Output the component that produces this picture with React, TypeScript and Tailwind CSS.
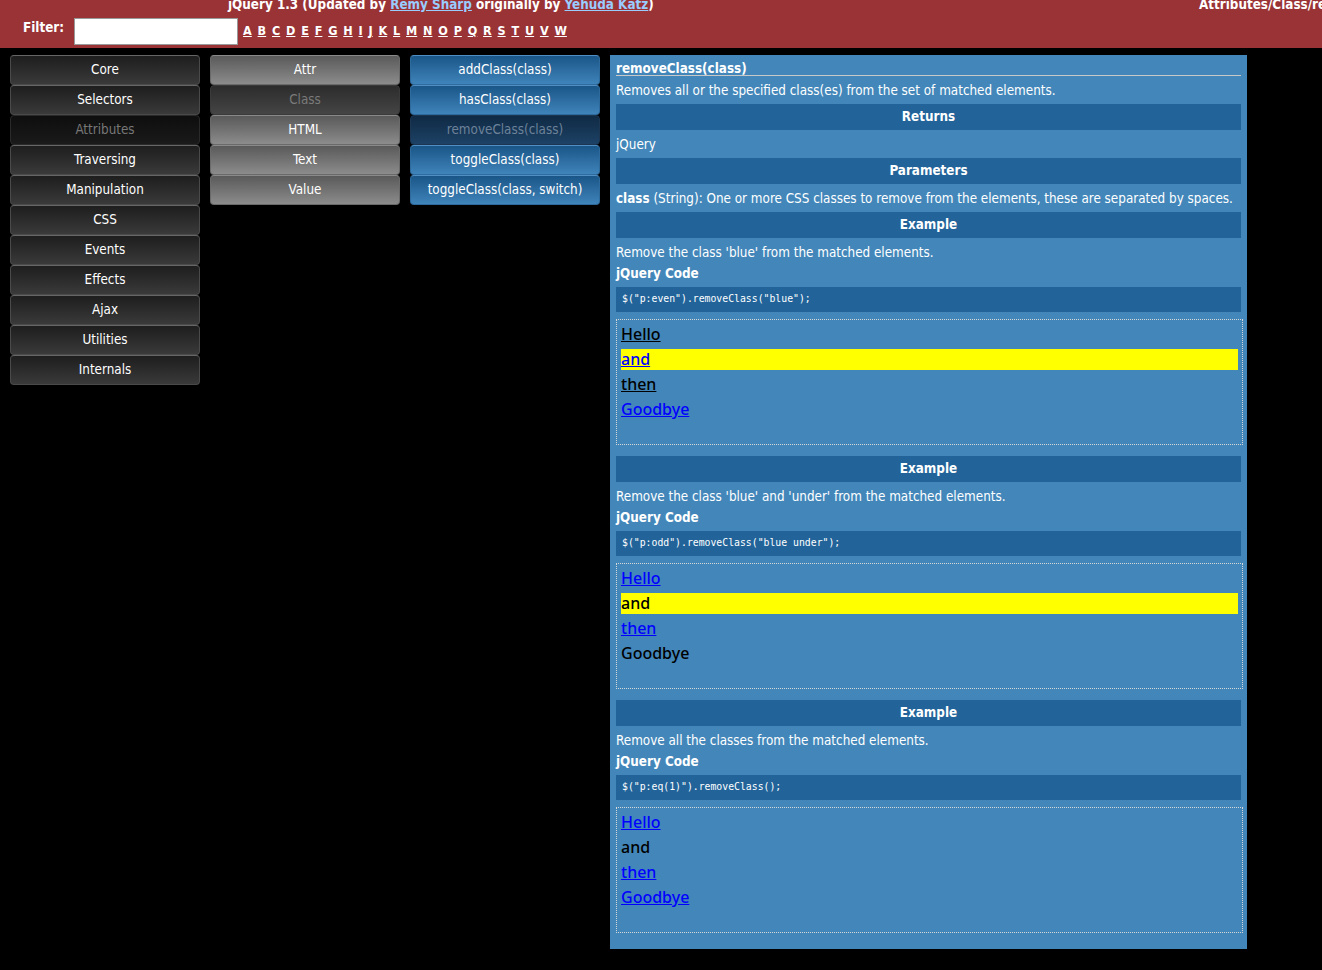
const letters = "ABCDEFGHIJKLMNOPQRSTUVW".split("");

const sections = ["Core", "Selectors", "Attributes", "Traversing", "Manipulation", "CSS", "Events", "Effects", "Ajax", "Utilities", "Internals"];
const groups = ["Attr", "Class", "HTML", "Text", "Value"];
const methods = ["addClass(class)", "hasClass(class)", "removeClass(class)", "toggleClass(class)", "toggleClass(class, switch)"];

type DemoLine = { text: string; blue?: boolean; under?: boolean; hilite?: boolean };

const examples: { desc: string; code: string; lines: DemoLine[] }[] = [
  {
    desc: "Remove the class 'blue' from the matched elements.",
    code: '$("p:even").removeClass("blue");',
    lines: [
      { text: "Hello", under: true },
      { text: "and", blue: true, under: true, hilite: true },
      { text: "then", under: true },
      { text: "Goodbye", blue: true, under: true },
    ],
  },
  {
    desc: "Remove the class 'blue' and 'under' from the matched elements.",
    code: '$("p:odd").removeClass("blue under");',
    lines: [
      { text: "Hello", blue: true, under: true },
      { text: "and", hilite: true },
      { text: "then", blue: true, under: true },
      { text: "Goodbye" },
    ],
  },
  {
    desc: "Remove all the classes from the matched elements.",
    code: '$("p:eq(1)").removeClass();',
    lines: [
      { text: "Hello", blue: true, under: true },
      { text: "and" },
      { text: "then", blue: true, under: true },
      { text: "Goodbye", blue: true, under: true },
    ],
  },
];

const NavButton = ({ label, tone, active }: { label: string; tone: "dark" | "gray" | "blue"; active?: boolean }) => {
  let cls = "";
  if (tone === "dark") {
    cls = active
      ? "bg-gradient-to-b from-[#0e0e0e] to-[#1a1a1a] text-[#777] border-[#2a2a2a]"
      : "bg-gradient-to-b from-[#1e1e1e] to-[#3a3a3a] text-white border-[#4a4a4a] border-t-[#666]";
  } else if (tone === "gray") {
    cls = active
      ? "bg-gradient-to-b from-[#2c2c2c] to-[#454545] text-[#7a7a7a] border-[#3a3a3a]"
      : "bg-gradient-to-b from-[#5a5a5a] to-[#8c8c8c] text-white border-[#6a6a6a] border-t-[#8a8a8a]";
  } else {
    cls = active
      ? "bg-gradient-to-b from-[#0f2a44] to-[#1d4266] text-[#6d8299] border-[#1c3550]"
      : "bg-gradient-to-b from-[#1a5688] to-[#3f84ba] text-white border-[#2e6a9c] border-t-[#4f8fc4]";
  }
  return (
    <div className={`h-[30px] pt-[1px] flex items-center justify-center rounded-[4px] border ${cls}`}>
      {label}
    </div>
  );
};

const Bar = ({ children }: { children: string }) => (
  <div className="mt-[4px] h-[26px] pt-[1px] bg-[#22649a] flex items-center justify-center font-bold">{children}</div>
);

export default function App() {
  return (
    <div className="min-h-[970px] bg-black text-[13.35px] overflow-hidden font-['DejaVu_Sans_Condensed','DejaVu_Sans',sans-serif] font-stretch-condensed">
      <div className="h-[48px] bg-[#993336] text-white font-bold overflow-hidden">
        <div className="flex -mt-[3px] h-[16px] leading-[16px] whitespace-nowrap">
          <span className="pl-[228px]">
            jQuery 1.3 (Updated by <span className="text-[#99ccff] underline">Remy Sharp</span> originally by{" "}
            <span className="text-[#99ccff] underline">Yehuda Katz</span>)
          </span>
          <span className="ml-auto w-[123px] shrink-0">Attributes/Class/removeClass</span>
        </div>
        <div className="flex items-start pl-[23px] mt-[5px]">
          <span className="mt-[2px] leading-[16px]">Filter:</span>
          <div className="ml-[10px] w-[164px] h-[27px] bg-white border border-[#999]"></div>
          <div className="ml-[5px] mt-[5px] flex w-[324px] justify-between text-[12.5px] leading-[16px]">
            {letters.map((l) => (
              <span key={l} className="underline">
                {l}
              </span>
            ))}
          </div>
        </div>
      </div>

      <div className="flex items-start gap-[10px] pl-[10px] pt-[7px]">
        <div className="w-[190px] flex flex-col">
          {sections.map((s) => (
            <NavButton key={s} label={s} tone="dark" active={s === "Attributes"} />
          ))}
        </div>
        <div className="w-[190px] flex flex-col">
          {groups.map((s) => (
            <NavButton key={s} label={s} tone="gray" active={s === "Class"} />
          ))}
        </div>
        <div className="w-[190px] flex flex-col">
          {methods.map((s) => (
            <NavButton key={s} label={s} tone="blue" active={s === "removeClass(class)"} />
          ))}
        </div>

        <div className="w-[637px] bg-[#4387ba] px-[6px] pt-[6px] pb-[5px] text-white">
          <div className="h-[15px] leading-[16px] font-bold border-b border-[#c8c8c8]">removeClass(class)</div>
          <p className="mt-[4px] pt-[1px] h-[20px] leading-[20px]">Removes all or the specified class(es) from the set of matched elements.</p>
          <Bar>Returns</Bar>
          <p className="mt-[4px] pt-[1px] h-[20px] leading-[20px]">jQuery</p>
          <Bar>Parameters</Bar>
          <p className="mt-[4px] pt-[1px] h-[20px] leading-[20px] whitespace-nowrap">
            <b>class</b> (String): One or more CSS classes to remove from the elements, these are separated by spaces.
          </p>
          {examples.map((ex, i) => (
            <div key={i}>
              <Bar>Example</Bar>
              <p className="mt-[4px] pt-[1px] h-[20px] leading-[20px]">{ex.desc}</p>
              <p className="mt-[1px] pt-[1px] h-[20px] leading-[20px] font-bold">jQuery Code</p>
              <div className="mt-[4px] h-[25px] bg-[#22649a] pl-[6px] flex items-center font-['DejaVu_Sans_Mono',monospace] font-stretch-normal text-[9.8px] whitespace-pre">
                {ex.code}
              </div>
              <div className="mt-[7px] mb-[11px] -mr-[2px] h-[126px] border border-dotted border-[#d8d8d8] px-[4px] pt-[4px] font-['Noto_Sans',sans-serif] font-stretch-normal font-medium">
                {ex.lines.map((ln, j) => (
                  <p
                    key={j}
                    className={`mb-[4px] h-[21px] leading-[21px] text-[16px] ${ln.blue ? "text-[#0000ff]" : "text-black"} ${
                      ln.hilite ? "bg-[#ffff00]" : ""
                    }`}
                  >
                    <span className={ln.under ? "underline" : ""}>{ln.text}</span>
                  </p>
                ))}
              </div>
            </div>
          ))}
        </div>
      </div>
    </div>
  );
}
